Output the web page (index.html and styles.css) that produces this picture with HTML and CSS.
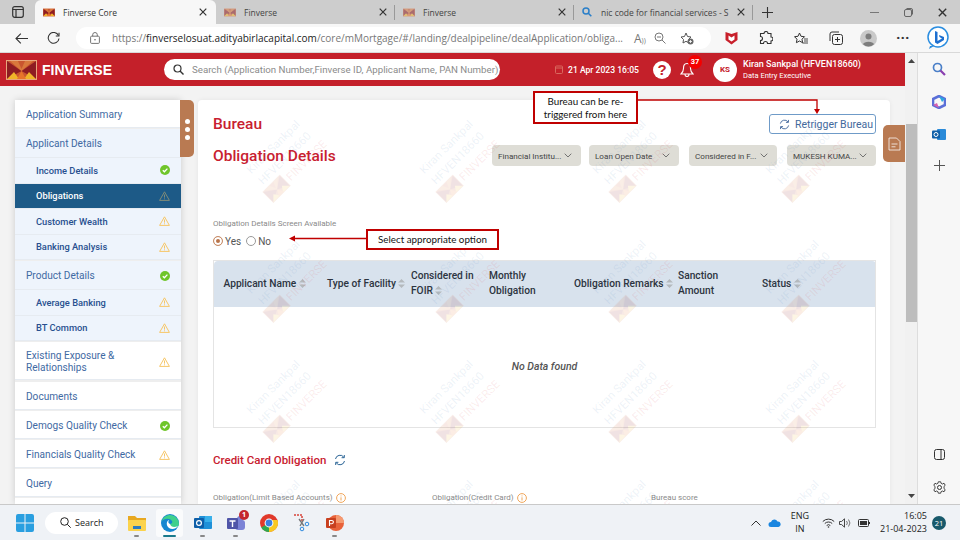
FILE: index.html
```html
<!DOCTYPE html>
<html lang="en">
<head>
    <meta charset="UTF-8">
    <title>Finverse Core</title>
    <link rel="stylesheet" href="styles.css">
</head>
<body>

<!-- shared icons -->
<svg class="defs" width="0" height="0">
    <symbol id="logo" viewBox="0 0 31 20">
        <rect width="31" height="20" fill="#c9562f"/>
        <rect x=".5" y=".5" width="30" height="19" fill="none" stroke="#e8a67c"/>
        <path d="M1 1 15.5 11 1 19zM30 1 15.5 11 30 19z" fill="#8e1c22"/>
        <path d="M1 19 8 12 13 19zM30 19 23 12 18 19z" fill="#f0b429"/>
        <path d="M15.5 11 20 19H11z" fill="#e8752a"/>
        <path d="M4 1H12L15.500 9 19 1H27L15.500 11z" fill="#d9793c"/>
    </symbol>
    <symbol id="tick" viewBox="0 0 10 10">
        <circle cx="5" cy="5" r="5" fill="#6fc52a"/>
        <path d="M2.800 5.200 4.400 6.800 7.400 3.600" fill="none" stroke="#fff" stroke-width="1.300"/>
    </symbol>
    <symbol id="warn" viewBox="0 0 11 10">
        <path d="M5.500 .8 10.400 9.400H.6z" fill="none" stroke="#f6c667" stroke-width="1" stroke-linejoin="round"/>
        <path d="M5.500 3.500V6.600M5.500 7.400V8.300" stroke="#f6c667" stroke-width="1"/>
    </symbol>
    <symbol id="sort" viewBox="0 0 7 9">
        <path d="M3.500 0 7 3.600H0zM3.500 9 0 5.400H7z" fill="#b4b9bd"/>
    </symbol>
    <symbol id="chev" viewBox="0 0 8 5">
        <path d="M.7.700 4 4 7.300.700" fill="none" stroke="#666" stroke-width=".9"/>
    </symbol>
    <symbol id="close" viewBox="0 0 8 8">
        <path d="M.7.700 7.300 7.300M7.300.700.7 7.300" fill="none" stroke="#333" stroke-width="1.200"/>
    </symbol>
    <symbol id="refresh" viewBox="0 0 12 12">
        <path d="M1.500 5A4.600 4.600 0 0 1 9.800 3.200M10.500 7A4.600 4.600 0 0 1 2.200 8.800" fill="none" stroke="currentColor" stroke-width="1"/>
        <path d="M10.300 1V3.700H7.600M1.700 11V8.300H4.400" fill="none" stroke="currentColor" stroke-width="1"/>
    </symbol>
    <symbol id="info" viewBox="0 0 10 10">
        <circle cx="5" cy="5" r="4.400" fill="none" stroke="#f0a65a"/>
        <path d="M5 2.500V3.400M5 4.300V7.500" stroke="#f0a65a"/>
    </symbol>
</svg>

<div class="window">

    <div class="tabstrip">
        <div class="tab-btn">
            <svg width="12" height="12" viewBox="0 0 12 12"><rect x=".7" y=".7" width="10.600" height="10.600" rx="2" fill="none" stroke="#333" stroke-width="1.200"/><path d="M.7 3.500H11.300M4 3.500V11.300" stroke="#333" stroke-width="1.200"/></svg>
        </div>
        <div class="tab active">
            <svg class="favicon" width="12" height="9"><use href="#logo"/></svg>
            <span class="tab-title">Finverse Core</span>
            <svg width="8" height="8"><use href="#close"/></svg>
        </div>
        <div class="tab sep">
            <svg class="favicon dim" width="12" height="9"><use href="#logo"/></svg>
            <span class="tab-title">Finverse</span>
            <svg width="8" height="8"><use href="#close"/></svg>
        </div>
        <div class="tab sep">
            <svg class="favicon dim" width="12" height="9"><use href="#logo"/></svg>
            <span class="tab-title">Finverse</span>
            <svg width="8" height="8"><use href="#close"/></svg>
        </div>
        <div class="tab sep">
            <svg class="favicon" width="10" height="10" viewBox="0 0 10 10"><circle cx="4" cy="4" r="3" fill="none" stroke="#2a7fc9" stroke-width="1.500"/><path d="M6.300 6.300 9.300 9.300" stroke="#2a7fc9" stroke-width="1.600"/></svg>
            <span class="tab-title cut">nic code for financial services - S</span>
            <svg width="8" height="8"><use href="#close"/></svg>
        </div>
        <div class="new-tab">
            <svg width="11" height="11" viewBox="0 0 11 11"><path d="M5.500 0V11M0 5.500H11" stroke="#333" stroke-width="1.100"/></svg>
        </div>
        <div class="win-btns">
            <svg width="9" height="9" viewBox="0 0 9 9"><path d="M0 4.500H9" stroke="#777"/></svg>
            <svg width="9" height="9" viewBox="0 0 9 9"><rect x=".5" y="1.500" width="7" height="7" rx="1.500" fill="none" stroke="#666"/><path d="M2.500.5H7A1.500 1.500 0 0 1 8.500 2V6.500" fill="none" stroke="#666"/></svg>
            <svg width="9" height="9"><use href="#close"/></svg>
        </div>
    </div>

    <div class="toolbar">
        <svg class="back" width="13" height="11" viewBox="0 0 13 11"><path d="M13 5.500H1M5.800.7 1 5.500 5.800 10.300" fill="none" stroke="#333" stroke-width="1.100"/></svg>
        <svg class="reload" width="13" height="13" viewBox="0 0 13 13"><path d="M11.500 3.500A5.400 5.400 0 1 0 12 6.500" fill="none" stroke="#333" stroke-width="1.100"/><path d="M12 .8V4H8.800" fill="none" stroke="#333" stroke-width="1.100"/></svg>
        <div class="address">
            <svg width="10" height="12" viewBox="0 0 10 12"><rect x=".6" y="4.200" width="8.800" height="7.200" rx="1" fill="none" stroke="#666" stroke-width=".9"/><path d="M2.700 4.200V2.800A2.300 2.300 0 0 1 7.300 2.800V4.200" fill="none" stroke="#666" stroke-width=".9"/><circle cx="5" cy="7.800" r=".8" fill="#666"/></svg>
            <span class="url">https://<b>finverselosuat.adityabirlacapital.com</b>/core/mMortgage/#/landing/dealpipeline/dealApplication/obliga...</span>
            <span class="aa">A<small>))</small></span>
            <svg width="12" height="12" viewBox="0 0 12 12"><circle cx="5" cy="5" r="4" fill="none" stroke="#777"/><path d="M8 8 11.500 11.500M3 5H7" stroke="#777"/></svg>
            <svg width="14" height="13" viewBox="0 0 14 13"><path d="M6 1 7.500 4.500 11 5 8.500 7.500 9 11 6 9.300 3 11 3.500 7.500 1 5 4.500 4.500z" fill="none" stroke="#555"/><circle cx="10.500" cy="9.500" r="3" fill="#666"/><path d="M10.500 8V11M9 9.500H12" stroke="#fff" stroke-width=".8"/></svg>
        </div>
        <div class="tools">
            <svg width="13" height="14" viewBox="0 0 13 14"><path d="M.5 1 6.500 3 12.500 1V9L6.500 13.500.5 9z" fill="#c8202b"/><path d="M3.500 4.500V8.500L6.500 10.500 9.500 8.500V4.500L6.500 6.500z" fill="#fff"/></svg>
            <svg width="14" height="14" viewBox="0 0 14 14"><path d="M5 2.500A2 2 0 0 1 9 2.500H12V6A2 2 0 0 1 12 10V12.500H8.500A2 2 0 0 0 4.500 12.500H1.500V9.500A2 2 0 0 0 1.500 5.500V2.500z" fill="none" stroke="#333" stroke-width="1.100"/></svg>
            <svg width="14" height="13" viewBox="0 0 14 13"><path d="M5.500 1 7 4.300 10.500 4.700 8 7.200 8.600 10.700 5.500 9 2.400 10.700 3 7.200.5 4.700 4 4.300z" fill="none" stroke="#333"/><path d="M10 7H14M10 9H14M8.500 11H14" stroke="#333" stroke-width=".9"/></svg>
            <svg width="14" height="14" viewBox="0 0 14 14"><rect x="3.500" y="3.500" width="10" height="10" rx="2" fill="none" stroke="#333"/><path d="M1 10V3A2 2 0 0 1 3 1H10M8.500 6V11M6 8.500H11" fill="none" stroke="#333"/></svg>
            <span class="profile"><svg width="17" height="17" viewBox="0 0 17 17"><circle cx="8.500" cy="8.500" r="8.500" fill="#c9c9c9"/><circle cx="8.500" cy="6.500" r="3" fill="#7d7d7d"/><path d="M3 14.200C3.500 10.800 13.500 10.800 14 14.200A8 8 0 0 1 3 14.200z" fill="#7d7d7d"/></svg></span>
            <span class="dots">···</span>
            <svg class="bing" width="24" height="24" viewBox="0 0 24 24"><circle cx="12" cy="11" r="10" fill="#fff" stroke="#2a8de0" stroke-width="1.500"/><path d="M4 20 3 23 8 20z" fill="#2a8de0"/><path d="M9 5 11.500 6V15L16 12.500 13.500 11 13 9 18 11V14L11.500 18 9 16.500z" fill="#1d6fd0"/></svg>
        </div>
    </div>

    <div class="browser-body">
        <div class="page">
            <header class="app-header">
                <svg class="app-logo" width="31" height="20"><use href="#logo"/></svg>
                <span class="brand">FINVERSE</span>
                <div class="search">
                    <svg width="11" height="11" viewBox="0 0 11 11"><circle cx="4.500" cy="4.500" r="3.500" fill="none" stroke="#333" stroke-width="1.200"/><path d="M7 7 10.500 10.500" stroke="#333" stroke-width="1.400"/></svg>
                    <span>Search (Application Number,Finverse ID, Applicant Name, PAN Number)</span>
                </div>
                <div class="date">
                    <svg width="8" height="9" viewBox="0 0 8 9"><rect x=".5" y="1" width="7" height="7.500" rx="1" fill="none" stroke="#d9695f"/><path d="M.5 3H7.500" stroke="#d9695f"/></svg>
                    <span>21 Apr 2023 16:05</span>
                </div>
                <div class="help">?</div>
                <div class="bell">
                    <svg width="14" height="15" viewBox="0 0 14 15"><path d="M7 1.500C4 1.500 3.500 4 3.500 6.500 3.500 9 2.500 10.500 1 12H13C11.500 10.500 10.500 9 10.500 6.500 10.500 4 10 1.500 7 1.500zM5 12.500A2 2 0 0 0 9 12.500" fill="none" stroke="#fff" stroke-width="1.100"/></svg>
                    <span class="badge">37</span>
                </div>
                <div class="avatar">KS</div>
                <div class="user">
                    <div class="user-name">Kiran Sankpal (HFVEN18660)</div>
                    <div class="user-role">Data Entry Executive</div>
                </div>
            </header>

            <div class="content">
                <nav class="sidenav">
                    <div class="nav-item white first">Application Summary</div>
                    <div class="nav-group">
                        <div class="nav-item">Applicant Details</div>
                        <div class="nav-sub">Income Details <svg width="10" height="10"><use href="#tick"/></svg></div>
                        <div class="nav-sub current">Obligations <svg width="11" height="10" class="warn-dark"><use href="#warn"/></svg></div>
                        <div class="nav-sub">Customer Wealth <svg width="11" height="10"><use href="#warn"/></svg></div>
                        <div class="nav-sub">Banking Analysis <svg width="11" height="10"><use href="#warn"/></svg></div>
                    </div>
                    <div class="nav-group">
                        <div class="nav-item">Product Details <svg width="10" height="10"><use href="#tick"/></svg></div>
                        <div class="nav-sub">Average Banking <svg width="11" height="10"><use href="#warn"/></svg></div>
                        <div class="nav-sub">BT Common <svg width="11" height="10"><use href="#warn"/></svg></div>
                    </div>
                    <div class="nav-item white tall">Existing Exposure &amp; Relationships <svg width="11" height="10"><use href="#warn"/></svg></div>
                    <div class="nav-item white">Documents</div>
                    <div class="nav-item white">Demogs Quality Check <svg width="10" height="10"><use href="#tick"/></svg></div>
                    <div class="nav-item white">Financials Quality Check <svg width="11" height="10"><use href="#warn"/></svg></div>
                    <div class="nav-item white">Query</div>
                    <div class="nav-item white"></div>
                </nav>
                <div class="nav-handle"><i></i><i></i><i></i></div>

                <main class="card">
                    <div class="title-row">
                        <h2>Bureau</h2>
                        <button class="retrigger"><svg width="11" height="11"><use href="#refresh"/></svg>Retrigger Bureau</button>
                    </div>
                    <div class="title-row second">
                        <h2>Obligation Details</h2>
                        <div class="filters">
                            <div class="filter f1">Financial Institu... <svg width="8" height="5"><use href="#chev"/></svg></div>
                            <div class="filter f2">Loan Open Date <svg width="8" height="5"><use href="#chev"/></svg></div>
                            <div class="filter f3">Considered in F... <svg width="8" height="5"><use href="#chev"/></svg></div>
                            <div class="filter f4">MUKESH KUMA... <svg width="8" height="5"><use href="#chev"/></svg></div>
                        </div>
                    </div>

                    <div class="field-label screen-label">Obligation Details Screen Available</div>
                    <div class="radios">
                        <span class="radio on"></span><span>Yes</span>
                        <span class="radio"></span><span>No</span>
                    </div>

                    <table class="data">
                        <colgroup>
                            <col class="c1"><col class="c2"><col class="c3"><col class="c4"><col class="c5"><col class="c6"><col class="c7">
                        </colgroup>
                        <thead>
                            <tr>
                                <th class="one-line">Applicant Name <svg width="7" height="9"><use href="#sort"/></svg></th>
                                <th class="one-line">Type of Facility <svg width="7" height="9"><use href="#sort"/></svg></th>
                                <th>Considered in FOIR <svg width="7" height="9"><use href="#sort"/></svg></th>
                                <th>Monthly Obligation</th>
                                <th class="one-line">Obligation Remarks <svg width="7" height="9"><use href="#sort"/></svg></th>
                                <th>Sanction Amount</th>
                                <th class="one-line">Status <svg width="7" height="9"><use href="#sort"/></svg></th>
                            </tr>
                        </thead>
                        <tbody>
                            <tr><td colspan="7">No Data found</td></tr>
                        </tbody>
                    </table>

                    <div class="card-heading">
                        <h3>Credit Card Obligation</h3>
                        <svg width="12" height="12"><use href="#refresh"/></svg>
                    </div>

                    <div class="field-row">
                        <div class="field-label">Obligation(Limit Based Accounts) <svg width="10" height="10"><use href="#info"/></svg></div>
                        <div class="field-label">Obligation(Credit Card) <svg width="10" height="10"><use href="#info"/></svg></div>
                        <div class="field-label">Bureau score</div>
                    </div>

                    <!-- marca d'agua -->
                    <div class="watermarks">
                        <div class="wm"><div><p>Kiran Sankpal</p><p>HFVEN18660</p><p><svg width="25" height="16"><use href="#logo"/></svg> <em>FINVERSE</em></p></div></div>
                        <div class="wm"><div><p>Kiran Sankpal</p><p>HFVEN18660</p><p><svg width="25" height="16"><use href="#logo"/></svg> <em>FINVERSE</em></p></div></div>
                        <div class="wm"><div><p>Kiran Sankpal</p><p>HFVEN18660</p><p><svg width="25" height="16"><use href="#logo"/></svg> <em>FINVERSE</em></p></div></div>
                        <div class="wm"><div><p>Kiran Sankpal</p><p>HFVEN18660</p><p><svg width="25" height="16"><use href="#logo"/></svg> <em>FINVERSE</em></p></div></div>
                        <div class="wm"><div><p>Kiran Sankpal</p><p>HFVEN18660</p><p><svg width="25" height="16"><use href="#logo"/></svg> <em>FINVERSE</em></p></div></div>
                        <div class="wm"><div><p>Kiran Sankpal</p><p>HFVEN18660</p><p><svg width="25" height="16"><use href="#logo"/></svg> <em>FINVERSE</em></p></div></div>
                        <div class="wm"><div><p>Kiran Sankpal</p><p>HFVEN18660</p><p><svg width="25" height="16"><use href="#logo"/></svg> <em>FINVERSE</em></p></div></div>
                        <div class="wm"><div><p>Kiran Sankpal</p><p>HFVEN18660</p><p><svg width="25" height="16"><use href="#logo"/></svg> <em>FINVERSE</em></p></div></div>
                        <div class="wm"><div><p>Kiran Sankpal</p><p>HFVEN18660</p><p><svg width="25" height="16"><use href="#logo"/></svg> <em>FINVERSE</em></p></div></div>
                        <div class="wm"><div><p>Kiran Sankpal</p><p>HFVEN18660</p><p><svg width="25" height="16"><use href="#logo"/></svg> <em>FINVERSE</em></p></div></div>
                        <div class="wm"><div><p>Kiran Sankpal</p><p>HFVEN18660</p><p><svg width="25" height="16"><use href="#logo"/></svg> <em>FINVERSE</em></p></div></div>
                        <div class="wm"><div><p>Kiran Sankpal</p><p>HFVEN18660</p><p><svg width="25" height="16"><use href="#logo"/></svg> <em>FINVERSE</em></p></div></div>
                        <div class="wm"><div><p>Kiran Sankpal</p><p>HFVEN18660</p><p><svg width="25" height="16"><use href="#logo"/></svg> <em>FINVERSE</em></p></div></div>
                        <div class="wm"><div><p>Kiran Sankpal</p><p>HFVEN18660</p><p><svg width="25" height="16"><use href="#logo"/></svg> <em>FINVERSE</em></p></div></div>
                        <div class="wm"><div><p>Kiran Sankpal</p><p>HFVEN18660</p><p><svg width="25" height="16"><use href="#logo"/></svg> <em>FINVERSE</em></p></div></div>
                        <div class="wm"><div><p>Kiran Sankpal</p><p>HFVEN18660</p><p><svg width="25" height="16"><use href="#logo"/></svg> <em>FINVERSE</em></p></div></div>
                    </div>
                </main>

                <div class="doc-tab">
                    <svg width="13" height="14" viewBox="0 0 13 14"><path d="M1 1H8.500L12 4.500V13H1z" fill="none" stroke="#fff" stroke-opacity=".75"/><path d="M3.500 7H9.500M3.500 9.800H7.500" stroke="#fff" stroke-opacity=".75"/></svg>
                </div>
            </div>

            <!-- anotacoes por cima da tela -->
            <div class="note note-top">Bureau can be re-<br>triggered from here</div>
            <svg class="arrow arrow-top" width="182" height="16" viewBox="0 0 182 16"><path d="M0 1H179V11" fill="none" stroke="#c00000" stroke-width="1.300"/><path d="M176 10H182L179 15z" fill="#c00000"/></svg>
            <div class="note note-radio">Select appropriate option</div>
            <svg class="arrow arrow-radio" width="77" height="7" viewBox="0 0 77 7"><path d="M77 3.500H4" stroke="#c00000" stroke-width="1.300"/><path d="M0 3.500 6 .5V6.500z" fill="#c00000"/></svg>
        </div>

        <div class="scrollbar">
            <svg width="7" height="4" viewBox="0 0 7 4"><path d="M3.500 0 7 4H0z" fill="#444"/></svg>
            <div class="thumb"></div>
            <svg width="7" height="4" viewBox="0 0 7 4"><path d="M3.500 4 0 0H7z" fill="#444"/></svg>
        </div>

        <aside class="edge-side">
            <svg width="14" height="14" viewBox="0 0 14 14"><circle cx="5.500" cy="5.500" r="4" fill="none" stroke="#4a7fc8" stroke-width="1.700"/><path d="M8.500 8.500 13 13" stroke="#8a3fb0" stroke-width="2.200"/></svg>
            <svg width="14" height="14" viewBox="0 0 14 14"><path d="M7 1 13 4V10L7 13 1 10V4z" fill="none" stroke="#5b6fd8" stroke-width="2.600"/><path d="M7 1 13 4 10 7z" fill="#2ba7e0"/><path d="M1 10 7 13 5 8z" fill="#d560b0"/></svg>
            <svg width="14" height="13" viewBox="0 0 14 13"><rect x="5" y="1" width="9" height="11" rx="1" fill="#2a8ad8"/><rect y="2.500" width="8" height="8" rx="1" fill="#0f5fa8"/><circle cx="4" cy="6.500" r="2" fill="none" stroke="#fff"/></svg>
            <svg width="11" height="11" viewBox="0 0 11 11"><path d="M5.500 0V11M0 5.500H11" stroke="#555"/></svg>
            <div class="edge-bottom">
                <svg width="11" height="11" viewBox="0 0 11 11"><rect x=".5" y=".5" width="10" height="10" rx="2" fill="none" stroke="#333"/><path d="M7 .5V10.500" stroke="#333"/></svg>
                <svg width="13" height="13" viewBox="0 0 13 13"><circle cx="6.500" cy="6.500" r="2" fill="none" stroke="#333"/><path d="M5.300 .8H7.700L8.100 2.400 9.600 3 11 2.200 12.200 4.300 11 5.400V7.600L12.200 8.700 11 10.800 9.600 10 8.100 10.600 7.700 12.200H5.300L4.900 10.600 3.400 10 2 10.800.8 8.700 2 7.600V5.400L.8 4.300 2 2.200 3.400 3 4.900 2.400z" fill="none" stroke="#333" stroke-width=".9"/></svg>
            </div>
        </aside>
    </div>

    <footer class="taskbar">
        <svg class="start" width="18" height="18" viewBox="0 0 18 18"><path d="M0 2 Q0 0 2 0H8.500V8.500H0zM9.500 0H16Q18 0 18 2V8.500H9.500zM0 9.500H8.500V18H2Q0 18 0 16zM9.500 9.500H18V16Q18 18 16 18H9.500z" fill="#2a9fe0"/></svg>
        <div class="task-search">
            <svg width="11" height="11" viewBox="0 0 11 11"><circle cx="4.500" cy="4.500" r="3.800" fill="none" stroke="#222"/><path d="M7.300 7.300 10.700 10.700" stroke="#222"/></svg>
            Search
        </div>
        <div class="task-apps">
            <div class="app open"><svg width="18" height="16" viewBox="0 0 18 16"><path d="M0 1H7L9 3H18V15H0z" fill="#e8a820"/><rect y="5" width="18" height="11" rx="1" fill="#fbd34c"/><rect x="5" y="11" width="8" height="3" fill="#2b7cc0"/></svg></div>
            <div class="app open current"><svg width="18" height="18" viewBox="0 0 18 18"><circle cx="9" cy="9" r="9" fill="#1586d0"/><path d="M18 10C18 5 14 1 9 1 6 1 2 3 1 7 4 4 9 4 11 7 12 9 10 10 9 10 9 13 12 14 14 14 16 13 18 12 18 10z" fill="#3fd08c"/><path d="M9 10C7 9 7 8 8 6 5 7 5 12 8 14 11 16 15 15 17 12 13 14 10 13 9 10z" fill="#fff"/></svg></div>
            <div class="app open"><svg width="18" height="16" viewBox="0 0 18 16"><rect x="5" y="1" width="13" height="13" rx="1" fill="#1e90d8"/><rect x="11" y="1" width="7" height="6" fill="#38b0ea"/><rect y="3" width="10" height="10" rx="1" fill="#0d5ea8"/><circle cx="5" cy="8" r="2.400" fill="none" stroke="#fff" stroke-width="1.200"/></svg></div>
            <div class="app open"><svg width="18" height="16" viewBox="0 0 18 16"><circle cx="13" cy="4" r="3" fill="#7b83d6"/><rect x="8" y="5" width="10" height="10" rx="3" fill="#7b83d6"/><rect y="3" width="11" height="11" rx="1" fill="#4f55a8"/><path d="M2.500 6H8.500M5.500 6V12" stroke="#fff" stroke-width="1.400"/></svg><span class="t-badge">1</span></div>
            <div class="app"><svg width="18" height="18" viewBox="0 0 18 18"><circle cx="9" cy="9" r="9" fill="#e0392b"/><path d="M9 9 1.200 13.500A9 9 0 0 0 9 18z" fill="#2fa84f"/><path d="M9 9 9 18A9 9 0 0 0 17.500 6H9z" fill="#f8c822"/><circle cx="9" cy="9" r="4.400" fill="#fff"/><circle cx="9" cy="9" r="3.400" fill="#3b7fe0"/></svg></div>
            <div class="app"><svg width="18" height="18" viewBox="0 0 18 18"><path d="M1 1H9V8" fill="none" stroke="#d8443a" stroke-width="1.500" stroke-dasharray="2 1"/><path d="M6 5 11 12M11 5 7 12" stroke="#777" stroke-width="1.300"/><circle cx="14" cy="10" r="1.800" fill="none" stroke="#2f8be0"/><circle cx="9" cy="15" r="1.800" fill="none" stroke="#2f8be0"/></svg></div>
            <div class="app open"><svg width="18" height="18" viewBox="0 0 18 18"><circle cx="10" cy="9" r="8" fill="#e8623a"/><path d="M10 1A8 8 0 0 1 18 9H10z" fill="#f59a70"/><rect y="4" width="10" height="10" rx="1" fill="#c8401f"/><path d="M3.500 12V6.500H5.800A1.600 1.600 0 0 1 5.800 9.700H3.500" fill="none" stroke="#fff" stroke-width="1.100"/></svg></div>
        </div>
        <div class="tray">
            <svg class="t-chevron" width="10" height="6" viewBox="0 0 10 6"><path d="M.5 5.500 5 1 9.500 5.500" fill="none" stroke="#333"/></svg>
            <svg class="t-cloud" width="13" height="8" viewBox="0 0 13 8"><path d="M3 8A2.500 2.500 0 0 1 3 3 3.500 3.500 0 0 1 9.500 2.500 2.800 2.800 0 0 1 10.500 8z" fill="#1a86e0"/></svg>
            <div class="lang">ENG<br>IN</div>
            <svg class="t-wifi" width="13" height="10" viewBox="0 0 13 10"><path d="M.8 3.500A8 8 0 0 1 12.200 3.500M2.800 5.500A5.300 5.300 0 0 1 10.200 5.500M4.700 7.500A2.600 2.600 0 0 1 8.300 7.500" fill="none" stroke="#333"/><circle cx="6.500" cy="9" r=".8" fill="#333"/></svg>
            <svg class="t-vol" width="12" height="10" viewBox="0 0 12 10"><path d="M.5 3.500H2.500L5.500.8V9.200L2.500 6.500H.5z" fill="none" stroke="#333" stroke-width=".9"/><path d="M7.500 3A3 3 0 0 1 7.500 7M9.500 1.500A5.500 5.500 0 0 1 9.500 8.500" fill="none" stroke="#555" stroke-width=".8"/></svg>
            <svg class="t-batt" width="12" height="8" viewBox="0 0 12 8"><rect x=".5" y=".5" width="10" height="7" rx="1" fill="none" stroke="#333"/><rect x="2" y="2" width="7" height="4" fill="#333"/><rect x="11" y="3" width="1" height="2" fill="#333"/></svg>
            <div class="clock">16:05<br>21-04-2023</div>
            <div class="notif">21</div>
        </div>
    </footer>
</div>

</body>
</html>
```

FILE: styles.css
```css
* {
    box-sizing: border-box;
}
html, body {
    margin: 0;
    padding: 0;
    height: 100%;
    overflow: hidden;
}
body {
    font-family: Roboto, sans-serif;
    color: #333;
}
svg {
    flex: none;
}
.defs {
    position: absolute;
}
.window {
    width: 960px;
    height: 540px;
    display: flex;
    flex-direction: column;
    background-color: #f3f3f3;
}

/* abas do navegador */
.tabstrip {
    height: 24px;
    display: flex;
    align-items: center;
    background-color: #cdcdcd;
    font-family: "Open Sans", sans-serif;
    font-size: 8.500px;
    color: #444;
}
.tab-btn {
    width: 35px;
    padding-left: 12px;
    display: flex;
}
.tab {
    width: 179px;
    height: 24px;
    padding: 0 7px 0 8px;
    display: flex;
    align-items: center;
    position: relative;
}
.tab.active {
    width: 181px;
    padding-right: 9px;
    background-color: #f7f7f7;
    border-radius: 6px 6px 0 0;
    color: #333;
}
.tab.sep {
    border-right: 1px solid #999;
    height: 15px;
}
.favicon {
    margin-right: 8px;
}
.favicon.dim {
    opacity: 0.55;
}
.tab-title {
    flex: 1;
    white-space: nowrap;
    overflow: hidden;
}
.tab-title.cut {
    margin-left: 1px;
}
.new-tab {
    width: 28px;
    display: flex;
    justify-content: center;
}
.win-btns {
    margin-left: auto;
    width: 90px;
    display: flex;
    justify-content: space-between;
    padding-right: 13px;
}

/* barra de endereco */
.toolbar {
    height: 29px;
    display: flex;
    align-items: center;
    background-color: #f7f7f7;
    border-bottom: 1px solid #d9d9d9;
}
.back {
    margin-left: 15px;
}
.reload {
    margin-left: 19px;
}
.address {
    width: 635px;
    height: 22px;
    margin-left: 16px;
    padding: 0 11px 0 14px;
    display: flex;
    align-items: center;
    background-color: #fff;
    border-radius: 11px;
    font-family: "Open Sans", sans-serif;
    font-size: 10px;
    color: #777;
}
.url {
    margin-left: 12px;
    width: 516px;
    white-space: nowrap;
    overflow: hidden;
}
.url b {
    font-weight: 400;
    color: #222;
}
.aa {
    width: 20px;
    margin-left: 6px;
    font-size: 12px;
}
.aa small {
    font-size: 7px;
}
.address svg:last-child {
    margin-left: 14px;
}
.tools {
    flex: 1;
    display: flex;
    align-items: center;
    padding-left: 14px;
    gap: 21px;
}
.profile {
    display: flex;
    margin-left: -4px;
}
.dots {
    font-size: 15px;
    font-weight: 700;
    color: #333;
    margin-left: -2px;
}
.bing {
    margin-left: -5px;
}

.browser-body {
    flex: 1;
    display: flex;
    min-height: 0;
}
.page {
    width: 905px;
    display: flex;
    flex-direction: column;
    position: relative;
}

/* cabecalho vermelho */
.app-header {
    height: 33px;
    display: flex;
    align-items: center;
    padding-left: 6px;
    background-color: #c4202a;
    color: #fff;
}
.brand {
    width: 122px;
    margin-left: 5px;
    font-family: "Liberation Sans", Arial, sans-serif;
    font-weight: 700;
    font-size: 14px;
}
.search {
    width: 336px;
    height: 21px;
    padding-left: 9px;
    display: flex;
    align-items: center;
    gap: 8px;
    background-color: #fff;
    border-radius: 11px;
    font-size: 9.700px;
    color: #8b8b8b;
    white-space: nowrap;
}
.date {
    margin-left: 55px;
    width: 91px;
    display: flex;
    align-items: center;
    gap: 5px;
    font-size: 8.600px;
    font-weight: 500;
}
.help {
    width: 18px;
    height: 18px;
    margin-left: 7px;
    border-radius: 50%;
    background-color: #fff;
    color: #c4202a;
    text-align: center;
    font: 700 15px/18px "Liberation Sans", sans-serif;
}
.bell {
    margin-left: 9px;
    width: 28px;
    display: flex;
    position: relative;
}
.badge {
    position: absolute;
    left: 8px;
    top: -7px;
    width: 14px;
    height: 14px;
    border-radius: 50%;
    background-color: #f40000;
    font: 700 7.500px/14px Roboto, sans-serif;
    text-align: center;
}
.avatar {
    width: 24px;
    height: 24px;
    margin-left: 5px;
    border-radius: 50%;
    background-color: #fff;
    color: #c4202a;
    font-size: 8px;
    font-weight: 700;
    line-height: 24px;
    text-align: center;
}
.user {
    margin-left: 6px;
}
.user-name {
    font-size: 9px;
    font-weight: 500;
    line-height: 12px;
}
.user-role {
    margin-top: 1px;
    font-size: 7.500px;
    line-height: 10px;
}

/* conteudo */
.content {
    flex: 1;
    min-height: 0;
    display: flex;
    gap: 17px;
    padding: 14px 15px 0;
    position: relative;
    overflow: hidden;
}
.sidenav {
    width: 166px;
    flex: none;
    background-color: #eee;
    box-shadow: 0 0 7px rgba(0, 0, 0, 0.16);
    font-size: 10.100px;
    color: #3f6aa3;
}
.nav-group {
    background-color: #eef4fc;
    margin-bottom: 1px;
}
.nav-item {
    min-height: 28px;
    padding: 2px 11px 0;
    display: flex;
    align-items: center;
    justify-content: space-between;
    line-height: 12px;
    border-bottom: 1px solid #e6ebf1;
}
.nav-group .nav-item {
    min-height: 29px;
}
.nav-item.white {
    background-color: #fff;
    margin-bottom: 1px;
}
.nav-item.tall {
    min-height: 38px;
    padding-right: 11px;
    margin-bottom: 2px;
}
.nav-sub {
    height: 25.500px;
    padding: 0 11px 0 21px;
    display: flex;
    align-items: center;
    justify-content: space-between;
    font-size: 9.300px;
    font-weight: 500;
    color: #28508f;
    border-bottom: 1px solid #e6ebf1;
}
.nav-sub.current {
    background-color: #1d5a87;
    color: #fff;
}
.warn-dark {
    opacity: 0.45;
}
.nav-handle {
    position: absolute;
    left: 180px;
    top: 14px;
    width: 14px;
    height: 57px;
    padding-top: 19px;
    display: flex;
    flex-direction: column;
    align-items: center;
    gap: 3px;
    background-color: #b97a52;
    border-radius: 0 5px 5px 0;
}
.nav-handle i {
    width: 5px;
    height: 5px;
    border-radius: 50%;
    background-color: #fff;
}
.card {
    width: 692px;
    flex: none;
    padding: 14px 14px 0 15px;
    background-color: #fff;
    border-radius: 4px 4px 0 0;
    box-shadow: 0 0 5px rgba(0, 0, 0, 0.06);
    position: relative;
    overflow: hidden;
}
.title-row {
    height: 20px;
    display: flex;
    align-items: center;
    justify-content: space-between;
}
.title-row.second {
    height: 21px;
    margin-top: 11px;
}
h2 {
    margin: 0;
    font-size: 15.500px;
    font-weight: 500;
    color: #c8202f;
}
.retrigger {
    width: 107px;
    height: 20px;
    padding: 0 0 0 9px;
    display: flex;
    align-items: center;
    gap: 5px;
    background-color: #fff;
    border: 1px solid #6f9bc8;
    border-radius: 3px;
    font-family: Roboto, sans-serif;
    font-size: 10.500px;
    color: #43689c;
}
.filters {
    display: flex;
    gap: 8px;
}
.filter {
    height: 21px;
    padding: 0 9px 0 6px;
    display: flex;
    align-items: center;
    justify-content: space-between;
    background-color: #deddd6;
    border-radius: 4px;
    font-size: 8.100px;
    color: #444;
    white-space: nowrap;
}
.f1 { width: 89px; }
.f2 { width: 90px; }
.f3 { width: 88px; margin-left: 2px; }
.f4 { width: 89px; margin-left: 2px; }
.field-label {
    font-size: 8px;
    line-height: 10px;
    color: #8a8a8a;
    display: flex;
    align-items: center;
    gap: 3px;
}
.screen-label {
    margin-top: 53px;
}
.radios {
    height: 16px;
    margin-top: 4px;
    display: flex;
    align-items: center;
    font-size: 10px;
    color: #555;
}
.radio {
    width: 10px;
    height: 10px;
    margin-right: 2px;
    border-radius: 50%;
    border: 1px solid #999;
    background-color: #fff;
}
.radios span:nth-child(2) {
    margin-right: 5px;
}
.radio.on {
    border-color: #c98f6c;
    background-color: #b9744a;
    box-shadow: inset 0 0 0 2px #fff;
}
table.data {
    width: 663px;
    margin-top: 11px;
    border-collapse: collapse;
    table-layout: fixed;
    border: 1px solid #e4e4e4;
}
.c1 { width: 104px; }
.c2 { width: 84px; }
.c3 { width: 78px; }
.c4 { width: 85px; }
.c5 { width: 104px; }
.c6 { width: 84px; }
.data th {
    height: 46px;
    padding: 0 3px 0 9.500px;
    background-color: #d8e2ed;
    font-size: 10.200px;
    font-weight: 500;
    line-height: 14.500px;
    text-align: left;
    color: #2c3440;
}
.data th.one-line {
    white-space: nowrap;
}
.data th:first-child {
    border-radius: 4px 0 0 0;
}
.data th:last-child {
    border-radius: 0 4px 0 0;
}
.data th svg {
    vertical-align: -1px;
}
.data td {
    height: 121px;
    text-align: center;
    font-size: 10.500px;
    font-style: italic;
    font-weight: 500;
    color: #555;
}
.card-heading {
    margin-top: 24px;
    height: 15px;
    display: flex;
    align-items: center;
    gap: 8px;
    color: #2a6496;
}
h3 {
    margin: 0;
    font-size: 11.500px;
    font-weight: 500;
    color: #c8202f;
}
.field-row {
    margin-top: 26px;
    display: grid;
    grid-template-columns: 219px 219px 1fr;
}

/* marca d'agua */
.watermarks {
    position: absolute;
    left: 0;
    top: -2px;
    display: grid;
    grid-template-columns: repeat(4, 173px);
    grid-auto-rows: 120px;
    pointer-events: none;
}
.wm {
    display: flex;
    align-items: center;
    justify-content: center;
}
.wm div {
    transform: rotate(-45deg);
    text-align: center;
    white-space: nowrap;
    font-size: 11.500px;
    line-height: 16px;
    color: rgba(90, 135, 190, 0.11);
}
.wm p {
    margin: 0;
}
.wm svg {
    vertical-align: -3px;
    opacity: 0.12;
}
.wm em {
    font-style: normal;
    color: rgba(220, 60, 60, 0.1);
}

.doc-tab {
    position: absolute;
    right: 0;
    top: 39px;
    width: 22px;
    height: 37px;
    display: flex;
    align-items: center;
    justify-content: center;
    background-color: #b97a52;
    border-radius: 5px 0 0 5px;
}

/* anotacoes */
.note {
    position: absolute;
    background-color: #fff;
    border: 2px solid #c00000;
    font-family: Lato, sans-serif;
    font-size: 9.800px;
    line-height: 13px;
    color: #111;
    text-align: center;
}
.note-top {
    left: 533px;
    top: 38px;
    width: 105px;
    height: 33px;
    padding-top: 2px;
}
.note-radio {
    left: 366px;
    top: 176px;
    width: 133px;
    height: 21px;
    padding-top: 2px;
}
.arrow {
    position: absolute;
}
.arrow-top {
    left: 638px;
    top: 46px;
}
.arrow-radio {
    left: 289px;
    top: 182px;
}

/* scrollbar da pagina */
.scrollbar {
    width: 13px;
    display: flex;
    flex-direction: column;
    align-items: center;
    padding: 6px 0;
    background-color: #f1f1f1;
    border-right: 1px solid #ddd;
}
.thumb {
    width: 11px;
    height: 198px;
    margin: 61px 0 auto;
    background-color: #bdbdbd;
}
.edge-side {
    flex: 1;
    display: flex;
    flex-direction: column;
    align-items: center;
    padding: 9px 0 10px;
    gap: 19px;
    background-color: #f7f7f7;
}
.edge-bottom {
    margin-top: auto;
    display: flex;
    flex-direction: column;
    align-items: center;
    gap: 21px;
}

/* barra de tarefas */
.taskbar {
    height: 36px;
    display: flex;
    align-items: center;
    padding-left: 16px;
    background-color: #eff2f6;
    border-top: 1px solid #c9c9c9;
    font-family: "Open Sans", sans-serif;
    color: #222;
}
.task-search {
    width: 73px;
    height: 22px;
    margin-left: 11px;
    padding-left: 15px;
    display: flex;
    align-items: center;
    gap: 4px;
    background-color: #fff;
    border-radius: 11px;
    font-size: 9px;
}
.task-apps {
    display: flex;
    margin-left: 5px;
    gap: 6px;
}
.app {
    width: 27px;
    height: 28px;
    display: flex;
    align-items: center;
    justify-content: center;
    position: relative;
    border-radius: 3px;
}
.app.current {
    background-color: #fafbfc;
}
.app.open::after {
    content: "";
    position: absolute;
    bottom: 0;
    left: 11px;
    width: 5px;
    height: 2px;
    border-radius: 1px;
    background-color: #888;
}
.app.current::after {
    left: 7px;
    width: 13px;
    background-color: #1b7a8c;
}
.t-badge {
    position: absolute;
    right: 0;
    top: 1px;
    width: 10px;
    height: 10px;
    border-radius: 50%;
    background-color: #c4262e;
    color: #fff;
    font-size: 7px;
    font-weight: 700;
    line-height: 10px;
    text-align: center;
}
.tray {
    margin-left: auto;
    padding-right: 14px;
    display: flex;
    align-items: center;
    font-size: 9px;
    line-height: 12.500px;
}
.t-cloud {
    margin-left: 6.500px;
}
.lang {
    width: 22px;
    margin-left: 8.500px;
    text-align: center;
}
.t-wifi {
    margin-left: 10.500px;
}
.t-vol {
    margin-left: 4.500px;
}
.t-batt {
    margin-left: 7px;
}
.clock {
    width: 50px;
    margin-left: 7px;
    text-align: right;
}
.notif {
    width: 14px;
    height: 14px;
    margin-left: 5px;
    border-radius: 50%;
    background-color: #17596b;
    color: #fff;
    font-size: 7.500px;
    line-height: 14px;
    text-align: center;
}
```
